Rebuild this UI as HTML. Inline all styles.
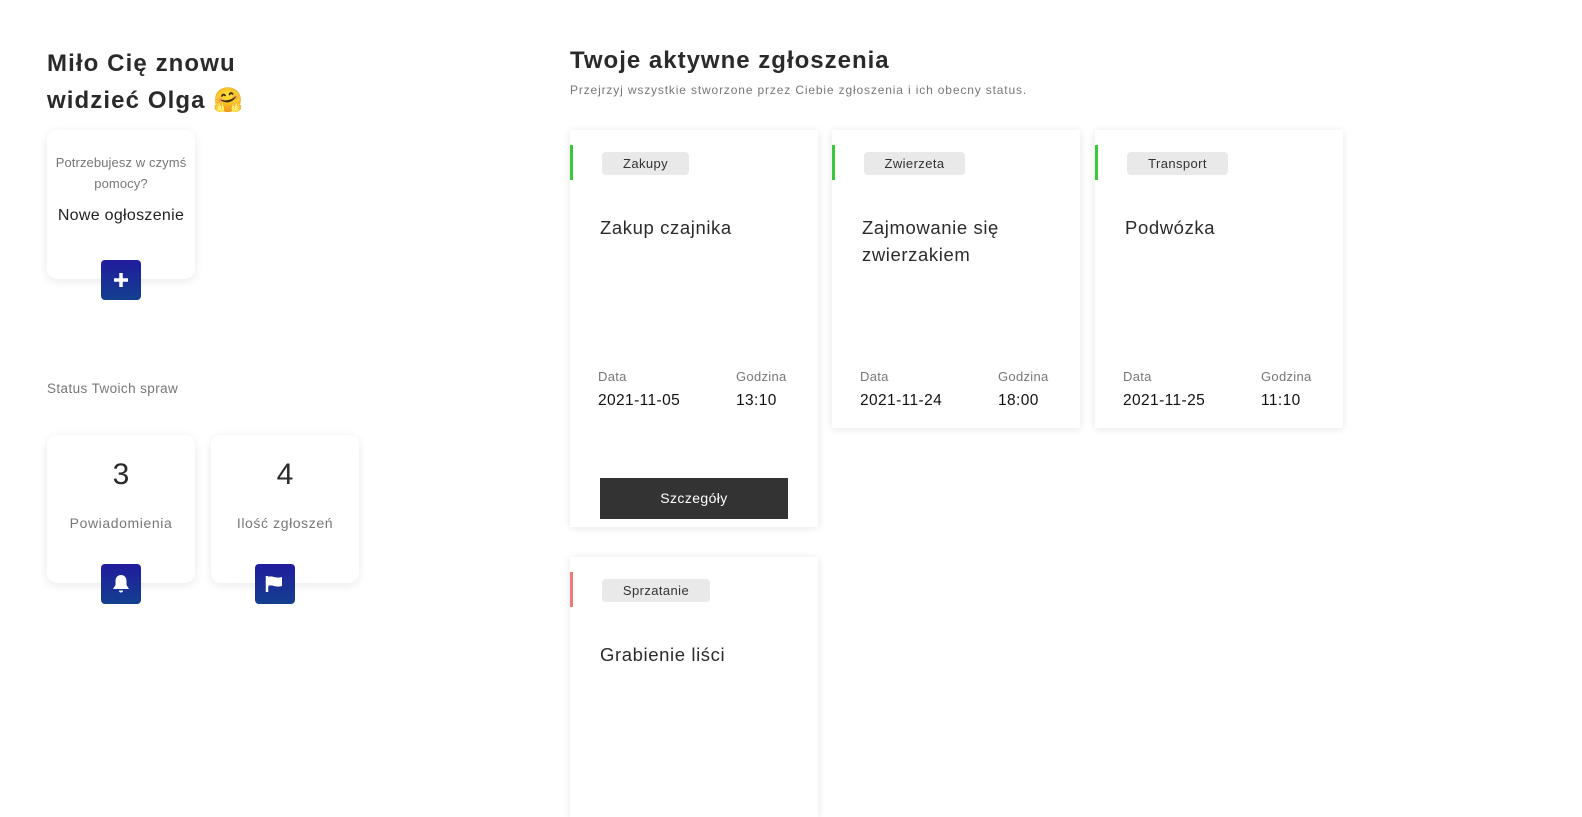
<!DOCTYPE html>
<html><head><meta charset="utf-8"><style>
*{box-sizing:border-box;margin:0;padding:0}
html,body{width:1582px;height:775px;overflow:hidden;background:#fff;font-family:"Liberation Sans",sans-serif;color:#2b2b2b}
.abs{position:absolute}
.card{position:absolute;background:#fff;border-radius:10px;box-shadow:0 2px 10px rgba(0,0,0,.09)}
.ic{position:absolute;width:40px;height:40px;border-radius:4px;background:linear-gradient(180deg,#221c9e,#133f8f);display:flex;align-items:center;justify-content:center}
.t{position:absolute;background:#fff;box-shadow:0 1px 8px rgba(0,0,0,.1)}
.bar{position:absolute;left:0;top:15px;width:3px;height:35px;background:#3cc83c}
.tag{position:absolute;left:32px;top:22px;height:23px;background:#e9e9e9;border-radius:4px;font-size:13px;line-height:23px;text-align:center;color:#333;letter-spacing:.4px}
.tt{position:absolute;left:30px;top:84px;font-size:18.5px;line-height:27px;color:#2b2b2b;letter-spacing:.6px}
.lb{position:absolute;top:239px;font-size:13px;color:#777;letter-spacing:.3px}
.vl{position:absolute;top:262px;font-size:15.5px;color:#111;letter-spacing:.4px}
</style></head><body>
<div class="abs" style="left:47px;top:45px;font-size:24px;font-weight:bold;line-height:37px;color:#2a2a2a;letter-spacing:1.1px">Miło Cię znowu<br>widzieć Olga <span style="font-family:'Noto Color Emoji',sans-serif">🤗</span></div>
<div class="card" style="left:47px;top:130px;width:148px;height:149px;text-align:center">
<div style="margin-top:22px;font-size:13px;line-height:21px;color:#777;letter-spacing:.1px">Potrzebujesz w czymś<br>pomocy?</div>
<div style="margin-top:13px;font-size:16px;color:#222;letter-spacing:.3px">Nowe ogłoszenie</div>
</div>
<div class="ic" style="left:101px;top:260px"><svg width="18" height="18" viewBox="0 0 18 18"><path d="M9 2v14M2 9h14" stroke="#fff" stroke-width="3.5"/></svg></div>
<div class="abs" style="left:47px;top:381px;font-size:13.5px;color:#777;letter-spacing:.4px">Status Twoich spraw</div>
<div class="card" style="left:47px;top:435px;width:148px;height:148px;text-align:center">
<div style="margin-top:23px;font-size:30px;color:#2a2a2a">3</div>
<div style="margin-top:23px;font-size:14px;color:#777;letter-spacing:.6px">Powiadomienia</div></div>
<div class="card" style="left:211px;top:435px;width:148px;height:148px;text-align:center">
<div style="margin-top:23px;font-size:30px;color:#2a2a2a">4</div>
<div style="margin-top:23px;font-size:14px;color:#777;letter-spacing:.6px">Ilość zgłoszeń</div></div>
<div class="ic" style="left:101px;top:564px"><svg width="18" height="20" viewBox="0 0 18 20"><path d="M9 1c-3.5 0-5.5 2.5-5.5 6v4L1 15h16l-2.5-4V7C14.5 3.5 12.5 1 9 1z M7 16.5a2 2 0 004 0z" fill="#fff"/></svg></div>
<div class="ic" style="left:255px;top:564px"><svg width="20" height="18" viewBox="0 0 20 18"><path d="M2 1v16" stroke="#fff" stroke-width="2.5"/><path d="M3 2c4-2 7 2 14 0v9c-7 2-10-2-14 0z" fill="#fff"/></svg></div>

<div class="abs" style="left:570px;top:47px;font-size:24px;font-weight:bold;color:#2a2a2a;letter-spacing:1px">Twoje aktywne zgłoszenia</div>
<div class="abs" style="left:570px;top:83px;font-size:12px;color:#777;letter-spacing:.85px">Przejrzyj wszystkie stworzone przez Ciebie zgłoszenia i ich obecny status.</div>

<div class="t" style="left:570px;top:130px;width:248px;height:397px">
<div class="bar"></div><div class="tag" style="width:87px">Zakupy</div>
<div class="tt">Zakup czajnika</div>
<div class="lb" style="left:28px">Data</div><div class="lb" style="left:166px">Godzina</div>
<div class="vl" style="left:28px">2021-11-05</div><div class="vl" style="left:166px">13:10</div>
<div style="position:absolute;left:30px;top:348px;width:188px;height:41px;background:#333;color:#fff;font-size:14px;line-height:41px;text-align:center;letter-spacing:.4px">Szczegóły</div>
</div>
<div class="t" style="left:832px;top:130px;width:248px;height:298px">
<div class="bar"></div><div class="tag" style="width:101px">Zwierzeta</div>
<div class="tt">Zajmowanie się<br>zwierzakiem</div>
<div class="lb" style="left:28px">Data</div><div class="lb" style="left:166px">Godzina</div>
<div class="vl" style="left:28px">2021-11-24</div><div class="vl" style="left:166px">18:00</div>
</div>
<div class="t" style="left:1095px;top:130px;width:248px;height:298px">
<div class="bar"></div><div class="tag" style="width:101px">Transport</div>
<div class="tt">Podwózka</div>
<div class="lb" style="left:28px">Data</div><div class="lb" style="left:166px">Godzina</div>
<div class="vl" style="left:28px">2021-11-25</div><div class="vl" style="left:166px">11:10</div>
</div>
<div class="t" style="left:570px;top:557px;width:248px;height:260px">
<div class="bar" style="background:#f07a7a"></div><div class="tag" style="width:108px">Sprzatanie</div>
<div class="tt">Grabienie liści</div>
</div>
</body></html>
